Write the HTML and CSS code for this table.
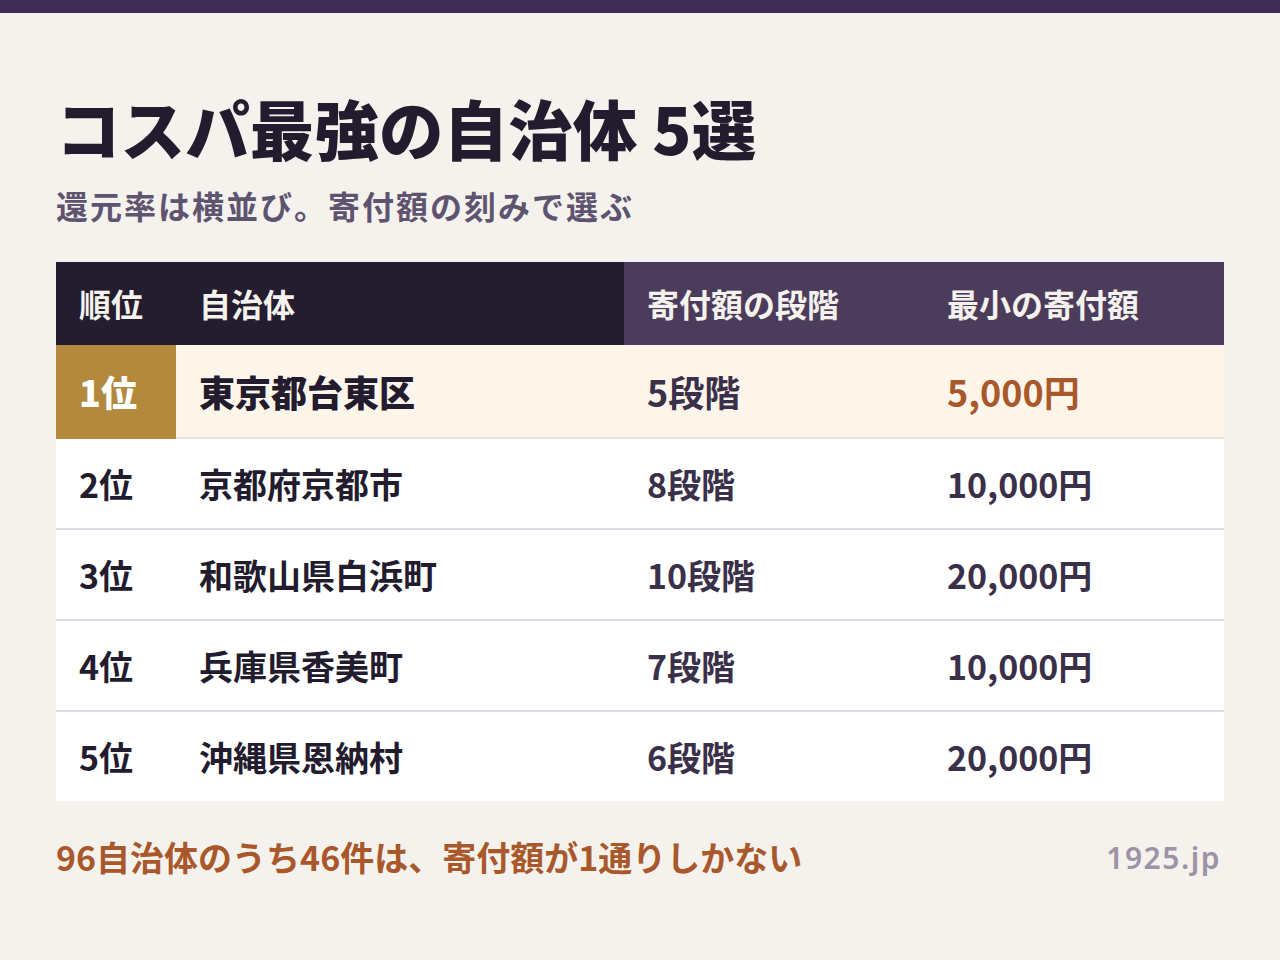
FILE: index.html
```html
<!DOCTYPE html>
<html lang="ja">
<head>
<meta charset="utf-8">
<title>コスパ最強の自治体 5選</title>
<link rel="stylesheet" href="styles.css">
</head>
<body>
<div class="topbar"></div>
<main class="page">
  <h1 class="title">コスパ最強の自治体 5選</h1>
  <p class="subtitle">還元率は横並び。寄付額の刻みで選ぶ</p>
  <table class="rank-table">
    <colgroup>
      <col class="c-rank"><col class="c-name"><col class="c-step"><col class="c-min">
    </colgroup>
    <thead>
      <tr>
        <th class="h-dark">順位</th>
        <th class="h-dark">自治体</th>
        <th class="h-purple">寄付額の段階</th>
        <th class="h-purple">最小の寄付額</th>
      </tr>
    </thead>
    <tbody>
      <tr class="top">
        <td class="rank">1位</td>
        <td class="name">東京都台東区</td>
        <td class="step">5段階</td>
        <td class="min accent">5,000円</td>
      </tr>
      <tr>
        <td class="rank">2位</td>
        <td class="name">京都府京都市</td>
        <td class="step">8段階</td>
        <td class="min">10,000円</td>
      </tr>
      <tr>
        <td class="rank">3位</td>
        <td class="name">和歌山県白浜町</td>
        <td class="step">10段階</td>
        <td class="min">20,000円</td>
      </tr>
      <tr>
        <td class="rank">4位</td>
        <td class="name">兵庫県香美町</td>
        <td class="step">7段階</td>
        <td class="min">10,000円</td>
      </tr>
      <tr class="last">
        <td class="rank">5位</td>
        <td class="name">沖縄県恩納村</td>
        <td class="step">6段階</td>
        <td class="min">20,000円</td>
      </tr>
    </tbody>
  </table>
  <footer class="foot">
    <p class="note">96自治体のうち46件は、寄付額が1通りしかない</p>
    <p class="site">1925.jp</p>
  </footer>
</main>
</body>
</html>
```

FILE: styles.css
```css
html, body {
  margin: 0;
  padding: 0;
}
body {
  background: #f5f2ed;
  font-family: "Noto Sans CJK JP", "Noto Sans", sans-serif;
  color: #231b2e;
  width: 1280px;
  height: 960px;
  overflow: hidden;
}
.topbar {
  height: 13px;
  background: #3f2d57;
}
.page {
  padding: 76px 56px 0 56px;
}
.title {
  margin: 0;
  font-size: 64.5px;
  line-height: 1.2;
  font-weight: 900;
  color: #231b2e;
  letter-spacing: 0.1px;
}
.subtitle {
  margin: 20px 0 0 0;
  font-size: 32px;
  line-height: 1.2;
  font-weight: 700;
  color: #5e5470;
  letter-spacing: 2px;
}
.rank-table {
  margin-top: 37px;
  width: 1168px;
  border-collapse: collapse;
  table-layout: fixed;
}
.c-rank { width: 120px; }
.c-name { width: 448px; }
.c-step { width: 300px; }
.c-min { width: 300px; }
.rank-table th {
  height: 83px;
  padding: 0 0 0 23px;
  text-align: left;
  font-size: 32px;
  font-weight: 700;
  color: #f5f2ed;
  box-sizing: border-box;
}
.h-dark { background: #241c2f; }
.h-purple { background: #4b3c5c; }
.rank-table td {
  height: 91px;
  padding: 0 0 0 23px;
  font-size: 34px;
  font-weight: 700;
  background: #ffffff;
  border-bottom: 2px solid #dfdae5;
  box-sizing: border-box;
}
.rank-table td.step,
.rank-table td.min {
  color: #3a3049;
}
.rank-table tr.top td {
  height: 93px;
  background: #fdf5e9;
  font-size: 36px;
  border-bottom-color: #e8e2da;
}
.rank-table tr.top td.rank {
  background: #b3893d;
  color: #ffffff;
  border-bottom-color: #b3893d;
  font-weight: 900;
}
.rank-table tr.top td.name {
  font-weight: 900;
}
.rank-table tr.top td.accent {
  color: #a9582b;
}
.rank-table tr.last td {
  height: 90px;
  border-bottom: none;
}
.foot {
  display: flex;
  justify-content: space-between;
  align-items: center;
  margin-top: 36px;
}
.note {
  margin: 0;
  font-size: 34px;
  font-weight: 700;
  color: #a9582b;
  line-height: 1.2;
}
.site {
  margin: 0 3px 0 0;
  font-family: "Noto Sans", sans-serif;
  font-size: 30px;
  font-weight: 600;
  color: #9e93a6;
  letter-spacing: 1.5px;
}
```
